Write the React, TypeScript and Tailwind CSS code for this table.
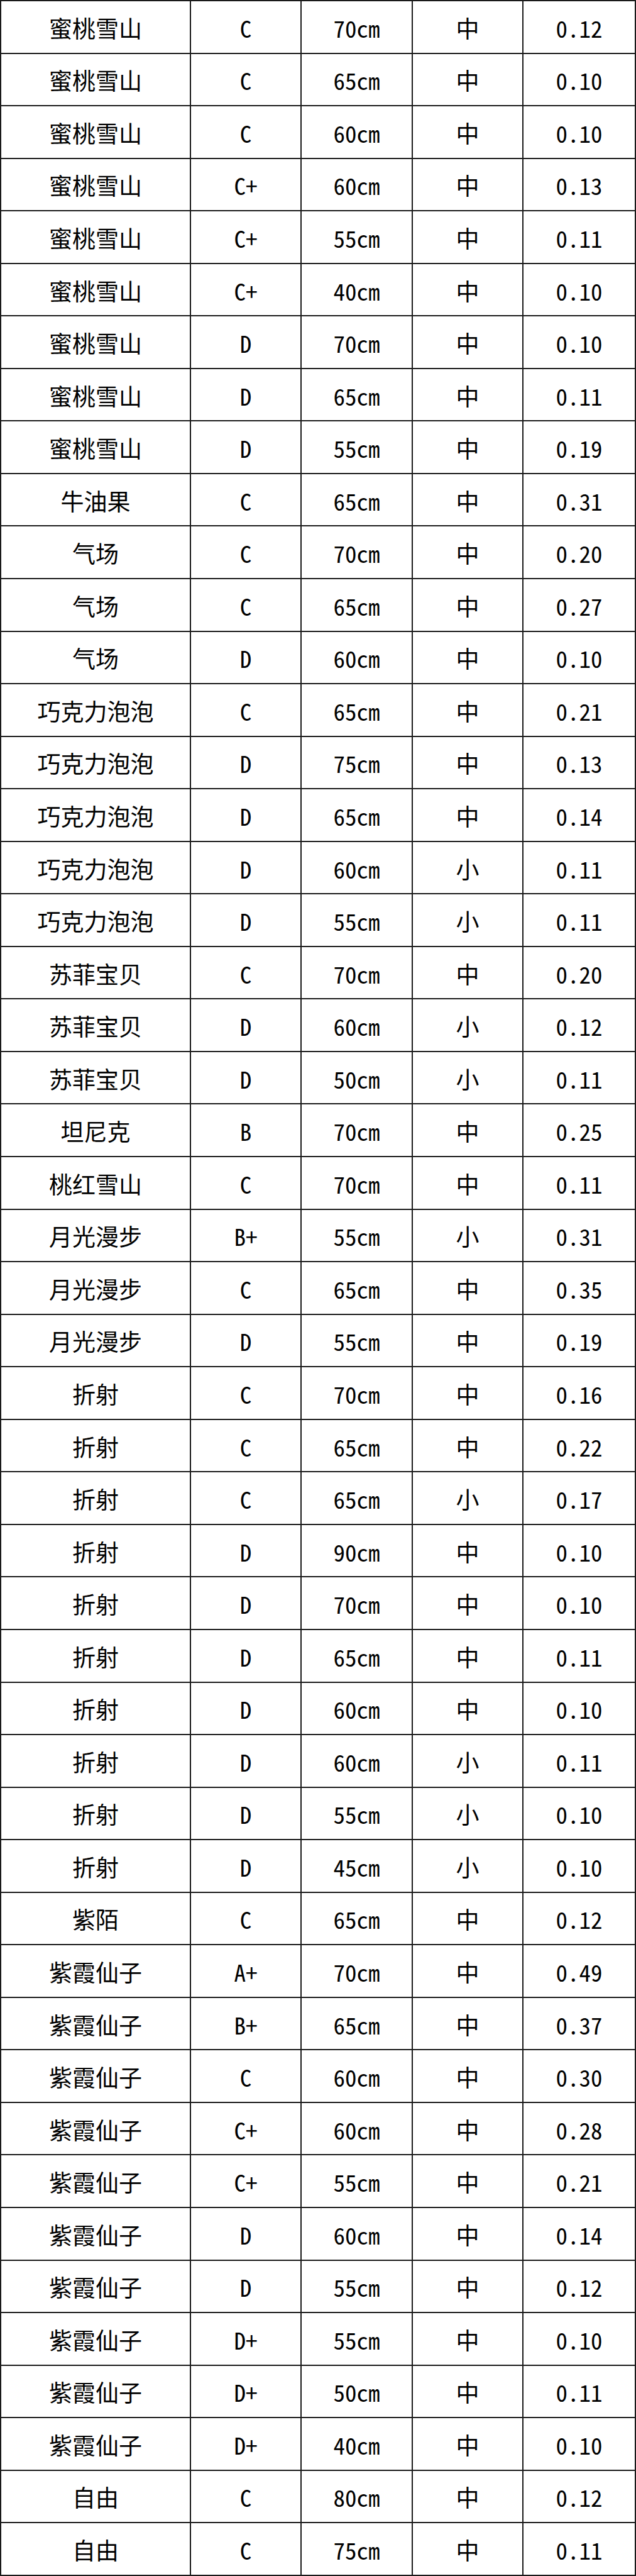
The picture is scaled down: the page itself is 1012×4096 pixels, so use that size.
import React from "react";

type Row = [string, string, string, string, string];

const rows: Row[] = [
  ["蜜桃雪山", "C", "70cm", "中", "0.12"],
  ["蜜桃雪山", "C", "65cm", "中", "0.10"],
  ["蜜桃雪山", "C", "60cm", "中", "0.10"],
  ["蜜桃雪山", "C+", "60cm", "中", "0.13"],
  ["蜜桃雪山", "C+", "55cm", "中", "0.11"],
  ["蜜桃雪山", "C+", "40cm", "中", "0.10"],
  ["蜜桃雪山", "D", "70cm", "中", "0.10"],
  ["蜜桃雪山", "D", "65cm", "中", "0.11"],
  ["蜜桃雪山", "D", "55cm", "中", "0.19"],
  ["牛油果", "C", "65cm", "中", "0.31"],
  ["气场", "C", "70cm", "中", "0.20"],
  ["气场", "C", "65cm", "中", "0.27"],
  ["气场", "D", "60cm", "中", "0.10"],
  ["巧克力泡泡", "C", "65cm", "中", "0.21"],
  ["巧克力泡泡", "D", "75cm", "中", "0.13"],
  ["巧克力泡泡", "D", "65cm", "中", "0.14"],
  ["巧克力泡泡", "D", "60cm", "小", "0.11"],
  ["巧克力泡泡", "D", "55cm", "小", "0.11"],
  ["苏菲宝贝", "C", "70cm", "中", "0.20"],
  ["苏菲宝贝", "D", "60cm", "小", "0.12"],
  ["苏菲宝贝", "D", "50cm", "小", "0.11"],
  ["坦尼克", "B", "70cm", "中", "0.25"],
  ["桃红雪山", "C", "70cm", "中", "0.11"],
  ["月光漫步", "B+", "55cm", "小", "0.31"],
  ["月光漫步", "C", "65cm", "中", "0.35"],
  ["月光漫步", "D", "55cm", "中", "0.19"],
  ["折射", "C", "70cm", "中", "0.16"],
  ["折射", "C", "65cm", "中", "0.22"],
  ["折射", "C", "65cm", "小", "0.17"],
  ["折射", "D", "90cm", "中", "0.10"],
  ["折射", "D", "70cm", "中", "0.10"],
  ["折射", "D", "65cm", "中", "0.11"],
  ["折射", "D", "60cm", "中", "0.10"],
  ["折射", "D", "60cm", "小", "0.11"],
  ["折射", "D", "55cm", "小", "0.10"],
  ["折射", "D", "45cm", "小", "0.10"],
  ["紫陌", "C", "65cm", "中", "0.12"],
  ["紫霞仙子", "A+", "70cm", "中", "0.49"],
  ["紫霞仙子", "B+", "65cm", "中", "0.37"],
  ["紫霞仙子", "C", "60cm", "中", "0.30"],
  ["紫霞仙子", "C+", "60cm", "中", "0.28"],
  ["紫霞仙子", "C+", "55cm", "中", "0.21"],
  ["紫霞仙子", "D", "60cm", "中", "0.14"],
  ["紫霞仙子", "D", "55cm", "中", "0.12"],
  ["紫霞仙子", "D+", "55cm", "中", "0.10"],
  ["紫霞仙子", "D+", "50cm", "中", "0.11"],
  ["紫霞仙子", "D+", "40cm", "中", "0.10"],
  ["自由", "C", "80cm", "中", "0.12"],
  ["自由", "C", "75cm", "中", "0.11"],
];

const App: React.FC = () => {
  return (
    <div className="w-[1012px] bg-white">
      <div
        className="border-t-2 border-l-2 border-[#1a1a1a] text-black text-[37px] leading-none"
        style={{
          fontFamily:
            '"Noto Sans Mono CJK SC", "Noto Sans CJK SC", "DejaVu Sans", sans-serif',
        }}
      >
        {rows.map((r, i) => (
          <div
            key={i}
            className="grid grid-cols-[302px_176px_177px_176px_179px] h-[83.55px]"
          >
            {r.map((cell, j) => (
              <div
                key={j}
                className="flex items-center justify-center pt-[3px] border-r-2 border-b-2 border-[#1a1a1a]"
              >
                {cell}
              </div>
            ))}
          </div>
        ))}
      </div>
    </div>
  );
};

export default App;
